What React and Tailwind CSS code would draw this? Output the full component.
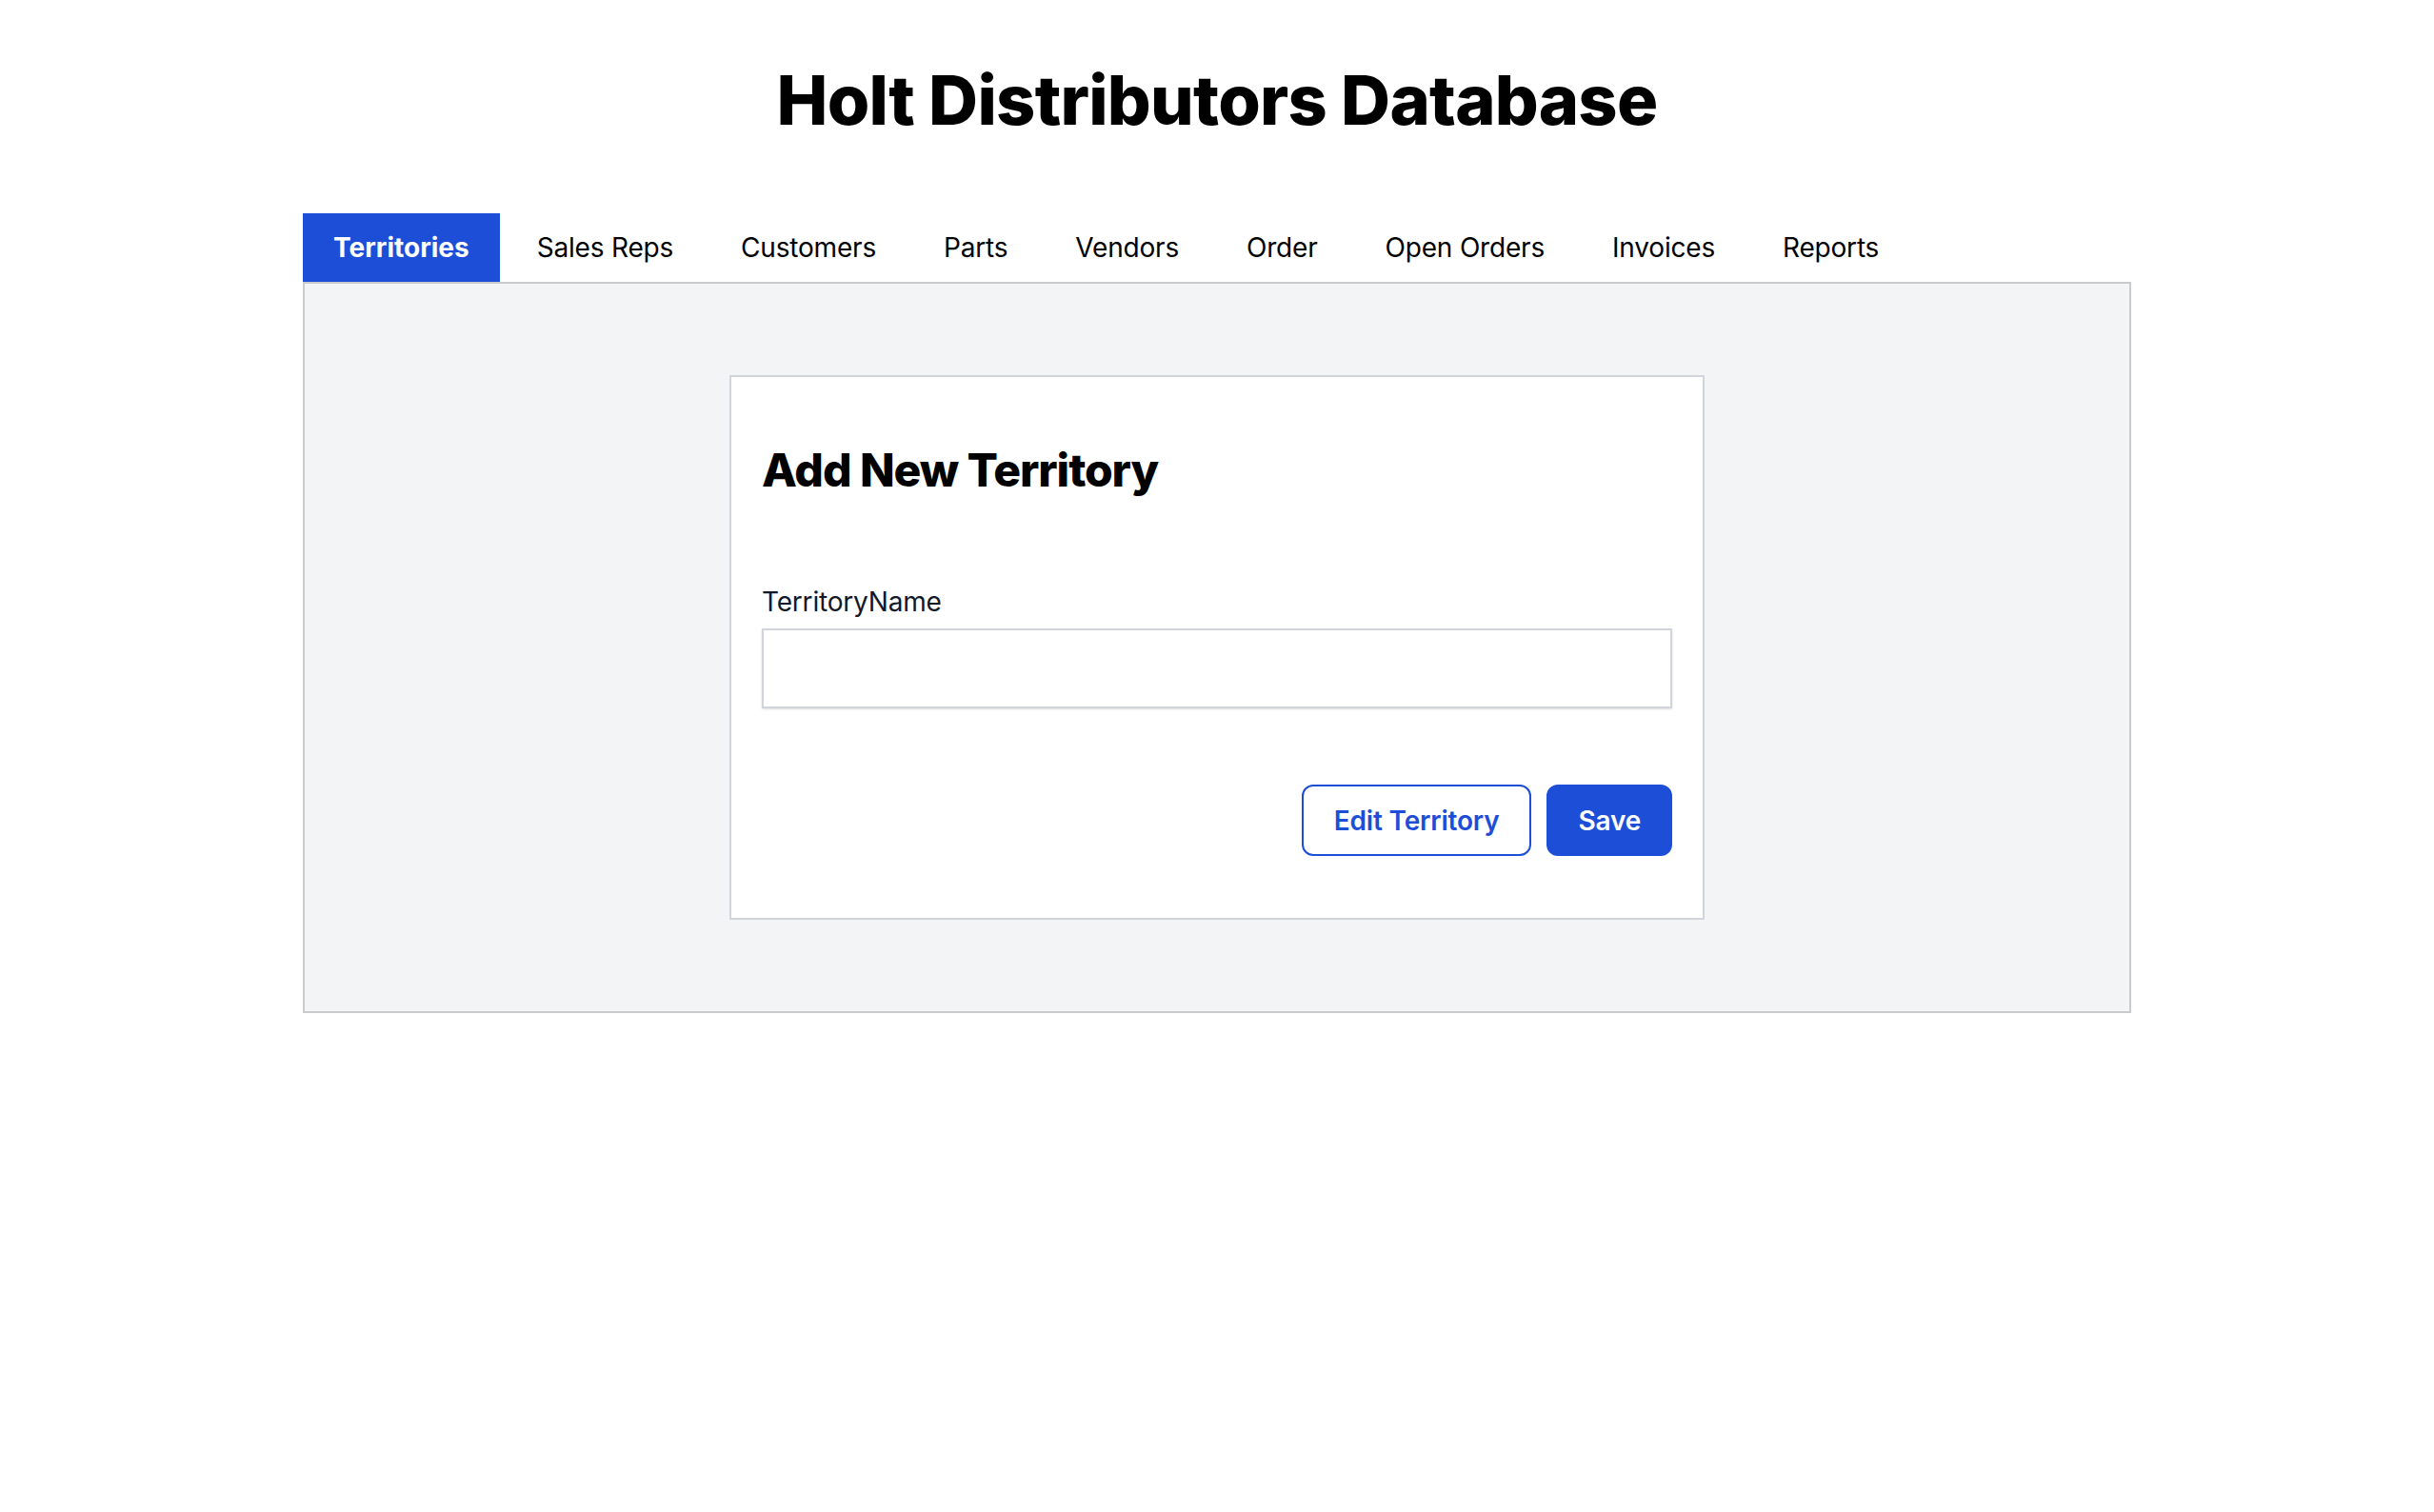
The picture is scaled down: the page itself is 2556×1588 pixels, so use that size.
import React, { useState } from 'react';

const tabs = ['Territories', 'Sales Reps', 'Customers', 'Parts', 'Vendors', 'Order', 'Open Orders', 'Invoices', 'Reports'];

const App = () => {
  const [active, setActive] = useState('Territories');
  const [name, setName] = useState('');

  return (
    <div className="min-h-screen bg-white text-black tracking-[-0.012em]" style={{ fontFamily: 'Inter, "Noto Sans", sans-serif' }}>
      <h1 className="pt-[69px] text-center text-[72px] leading-none font-extrabold tracking-[-0.01em]">
        Holt Distributors Database
      </h1>

      <div className="mx-auto mt-[83px] w-[1920px]">
        <div className="flex gap-[7px]">
          {tabs.map(t => (
            <button
              key={t}
              onClick={() => setActive(t)}
              className={`h-[72px] px-[32px] text-[28px] leading-[72px] ${active === t ? 'bg-[#1d4ed8] text-white font-bold tracking-normal' : 'text-black font-normal'}`}
            >
              {t}
            </button>
          ))}
        </div>

        <div className="border-2 border-[#cbcbcb] bg-[#f3f4f6] py-[96px]">
          <div className="mx-auto w-[1024px] border-2 border-[#d1d5db] bg-white px-[32px] pt-[32px] pb-[65px]">
            <h2 className="mt-[30px] text-[48px] leading-[72px] font-extrabold tracking-[-0.022em]">Add New Territory</h2>

            <label className="mt-[82px] mb-[8px] block text-[28px] leading-[40px] text-[#111827]">TerritoryName</label>
            <input
              value={name}
              onChange={e => setName(e.target.value)}
              className="block h-[84px] w-full border-2 border-[#d1d5db] bg-white px-[24px] text-[28px] shadow-sm outline-none"
            />

            <div className="mt-[80px] flex justify-end gap-[16px]">
              <button className="h-[75px] rounded-[12px] border-2 border-[#1d4ed8] bg-white px-[32px] text-[28px] font-semibold text-[#1d4ed8]">
                Edit Territory
              </button>
              <button className="h-[75px] rounded-[12px] bg-[#1d4ed8] px-[33px] text-[28px] font-semibold text-white">
                Save
              </button>
            </div>
          </div>
        </div>
      </div>
    </div>
  );
};

export default App;
